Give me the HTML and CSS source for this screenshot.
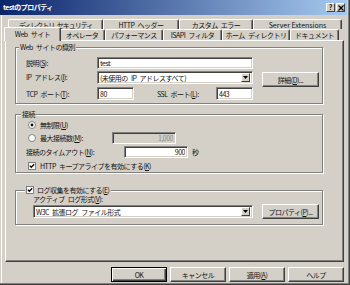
FILE: index.html
```html
<!DOCTYPE html>
<html lang="ja">
<head>
  <meta charset="utf-8">
  <title>testのプロパティ</title>
  <link rel="stylesheet" href="styles.css">
</head>
<body>
<div class="window">
  <div class="titlebar">
    <span class="title">testのプロパティ</span>
    <div class="caption-buttons">
      <span class="cap-btn">?</span>
      <span class="cap-btn">
        <svg width="6" height="6" viewBox="0 0 6 6"><path d="M0.5 0.5 L5.5 5.5 M5.5 0.5 L0.5 5.5" stroke="#000" stroke-width="1.3"/></svg>
      </span>
    </div>
  </div>

  <div class="tabs">
    <div class="tab-row back">
      <div class="tab tight">ディレクトリ セキュリティ</div>
      <div class="tab">HTTP ヘッダー</div>
      <div class="tab">カスタム エラー</div>
      <div class="tab latin">Server Extensions</div>
    </div>
    <div class="tab-row front">
      <div class="tab active">Web サイト</div>
      <div class="tab">オペレータ</div>
      <div class="tab">パフォーマンス</div>
      <div class="tab">ISAPI フィルタ</div>
      <div class="tab">ホーム ディレクトリ</div>
      <div class="tab">ドキュメント</div>
    </div>
  </div>

  <div class="panel">
    <fieldset class="group group-id">
      <legend>Web サイトの識別</legend>
      <div class="row row-desc">
        <label class="label">説明(<u>S</u>):</label>
        <input class="textbox wide" type="text" value="test">
      </div>
      <div class="row row-ip">
        <label class="label">IP アドレス(<u>I</u>):</label>
        <div class="combo wide">
          <span class="combo-text">(未使用の IP アドレスすべて)</span>
          <span class="drop-btn"><svg width="5" height="3" viewBox="0 0 5 3"><path d="M0 0 H5 L2.5 3 Z" fill="#000"/></svg></span>
        </div>
        <button class="btn side-btn">詳細(<u>D</u>)...</button>
      </div>
      <div class="row row-port">
        <label class="label">TCP ポート(<u>T</u>):</label>
        <input class="textbox port" type="text" value="80">
        <label class="label ssl">SSL ポート(<u>L</u>):</label>
        <input class="textbox port" type="text" value="443">
      </div>
    </fieldset>

    <fieldset class="group group-conn">
      <legend>接続</legend>
      <div class="row row-opt">
        <svg class="radio" width="8" height="8" viewBox="0 0 8 8"><circle cx="4" cy="4" r="3.5" fill="#fff" stroke="#808080"/><circle cx="4" cy="4" r="1.4" fill="#000"/></svg>
        <span>無制限(<u>U</u>)</span>
      </div>
      <div class="row row-field">
        <svg class="radio" width="8" height="8" viewBox="0 0 8 8"><circle cx="4" cy="4" r="3.5" fill="#fff" stroke="#808080"/></svg>
        <label class="label conn-label">最大接続数(<u>M</u>):</label>
        <input class="textbox num" type="text" value="1,000" disabled>
      </div>
      <div class="row row-field">
        <label class="label timeout-label">接続のタイムアウト(<u>N</u>):</label>
        <input class="textbox num" type="text" value="900">
        <span class="unit">秒</span>
      </div>
      <div class="row row-opt row-keep">
        <svg class="check" width="8" height="8" viewBox="0 0 8 8"><rect x="0.5" y="0.5" width="7" height="7" fill="#fff" stroke="#808080"/><path d="M1.8 3.6 L3.3 5.2 L6.2 2.2" fill="none" stroke="#000" stroke-width="1.3"/></svg>
        <span>HTTP キープアライブを有効にする(<u>K</u>)</span>
      </div>
    </fieldset>

    <fieldset class="group group-log">
      <legend>
        <svg class="check" width="8" height="8" viewBox="0 0 8 8"><rect x="0.5" y="0.5" width="7" height="7" fill="#fff" stroke="#808080"/><path d="M1.8 3.6 L3.3 5.2 L6.2 2.2" fill="none" stroke="#000" stroke-width="1.3"/></svg>
        <span>ログ収集を有効にする(<u>E</u>)</span>
      </legend>
      <div class="log-label">アクティブ ログ形式(<u>V</u>):</div>
      <div class="row row-log">
        <div class="combo log-combo">
          <span class="combo-text">W3C 拡張ログ ファイル形式</span>
          <span class="drop-btn"><svg width="5" height="3" viewBox="0 0 5 3"><path d="M0 0 H5 L2.5 3 Z" fill="#000"/></svg></span>
        </div>
        <button class="btn side-btn">プロパティ(<u>P</u>)...</button>
      </div>
    </fieldset>
  </div>

  <div class="dialog-buttons">
    <button class="btn dlg default">OK</button>
    <button class="btn dlg">キャンセル</button>
    <button class="btn dlg">適用(<u>A</u>)</button>
    <button class="btn dlg">ヘルプ</button>
  </div>
</div>
</body>
</html>
```

FILE: styles.css
```css
* {
  box-sizing: border-box;
}

body {
  margin: 0;
  font-family: "Noto Sans CJK JP", "Noto Sans", sans-serif;
  font-size: 7px;
  letter-spacing: -0.5px;
  word-spacing: 2px;
  color: #111;
  background: #d4d0c8;
}

u {
  text-decoration-thickness: 1px;
  text-underline-offset: 1px;
}

.window {
  width: 350px;
  height: 285px;
  padding-right: 3px;
  background: #d4d0c8;
  box-shadow: inset -1px -1px 0 #404040, inset -2px -2px 0 #808080, inset 1px 0 0 #d4d0c8, inset 2px 0 0 #ffffff;
}

/* title bar */
.titlebar {
  height: 15px;
  display: flex;
  align-items: center;
  justify-content: space-between;
  padding: 0 2px 0 3px;
  background: linear-gradient(to right, #0a246a, #a6caf0);
  color: #fff;
  font-weight: bold;
}

.title {
  line-height: 15px;
}

.caption-buttons {
  display: flex;
}

.cap-btn {
  width: 9px;
  height: 9px;
  display: flex;
  align-items: center;
  justify-content: center;
  background: #d4d0c8;
  color: #000;
  font-size: 7px;
  letter-spacing: 0;
  line-height: 1;
  border: 1px solid;
  border-color: #fff #404040 #404040 #fff;
}

.cap-btn + .cap-btn {
  margin-left: 1px;
}

/* tabs */
.tabs {
  margin-top: 4px;
}

.tab-row {
  display: flex;
}

.tab-row.back {
  height: 10px;
  margin-left: 8px;
}

.tab-row.front {
  height: 11px;
  margin-left: 6px;
}

.tab {
  height: 100%;
  display: flex;
  align-items: center;
  justify-content: center;
  white-space: nowrap;
  background: #d4d0c8;
  border: 1px solid #fff;
  border-right-color: #404040;
  border-bottom: none;
  border-radius: 2px 2px 0 0;
  box-shadow: inset -1px 0 0 #808080;
}

.tab.tight {
  letter-spacing: -1px;
}

.tab.latin {
  letter-spacing: 0;
  word-spacing: 0;
}

.back .tab:nth-child(1) { width: 95px; }
.back .tab:nth-child(2) { width: 76px; }
.back .tab:nth-child(3) { width: 74px; }
.back .tab:nth-child(4) { width: 89px; }

.front .tab:nth-child(1) { width: 57px; }
.front .tab:nth-child(2) { width: 46px; }
.front .tab:nth-child(3) { width: 58px; }
.front .tab:nth-child(4) { width: 59px; }
.front .tab:nth-child(5) { width: 68px; }
.front .tab:nth-child(6) { width: 49px; }

.tab.active {
  position: relative;
  z-index: 1;
  align-self: flex-start;
  height: 14px;
  margin: -2px -2px 0;
  padding-bottom: 2px;
}

/* page */
.panel {
  margin-left: 5px;
  width: 339px;
  height: 222px;
  padding: 1px 0 0 9px;
  border: 1px solid #fff;
  border-right-color: #404040;
  border-bottom-color: #404040;
  box-shadow: inset -1px -1px 0 #808080;
}

.group {
  width: 308px;
  margin: 0;
  min-inline-size: 0;
  padding: 5px 0 3px 10px;
  border: 1px solid #808080;
  box-shadow: inset 1px 1px 0 #fff, 1px 1px 0 #fff;
}

.group legend {
  margin-left: -7px;
  padding: 0 1px;
  line-height: 10px;
  background: #d4d0c8;
}

.row {
  display: flex;
  align-items: center;
}

.label {
  white-space: nowrap;
}

.textbox,
.combo {
  height: 12px;
  border: 1px solid;
  border-color: #808080 #fff #fff #808080;
  box-shadow: inset 1px 1px 0 #404040, inset -1px -1px 0 #d4d0c8;
  background: #fff;
}

.textbox {
  margin: 0;
  padding: 0 2px;
  font: inherit;
  letter-spacing: inherit;
  word-spacing: inherit;
  line-height: 10px;
  color: #111;
  outline: none;
}

.textbox:disabled {
  background: #d4d0c8;
  color: #8a8a8a;
}

.combo {
  height: 13px;
  display: flex;
  align-items: center;
  justify-content: space-between;
  padding: 2px;
  white-space: nowrap;
}

.drop-btn {
  width: 9px;
  height: 9px;
  display: flex;
  align-items: center;
  justify-content: center;
  background: #d4d0c8;
  border: 1px solid;
  border-color: #fff #404040 #404040 #fff;
}

.btn {
  margin: 0;
  padding: 0;
  font: inherit;
  letter-spacing: inherit;
  word-spacing: inherit;
  color: #111;
  background: #d4d0c8;
  border: 1px solid;
  border-color: #fff #404040 #404040 #fff;
  box-shadow: inset -1px -1px 0 #808080;
  white-space: nowrap;
}

/* group 1 */
.group-id .row .label:first-child {
  width: 71px;
}

.wide {
  width: 156px;
}

.row-desc {
  height: 12px;
  margin-bottom: 2px;
}

.row-ip {
  height: 16px;
  align-items: flex-start;
}

.row-ip .label {
  line-height: 13px;
}

.side-btn {
  width: 57px;
  height: 15px;
  margin: 1px 0 0 9px;
}

.row-port {
  height: 13px;
}

.port {
  width: 37px;
  height: 13px;
}

.label.ssl {
  width: 59px;
  margin-left: 23px;
}

/* group 2 */
.group-conn {
  margin-top: 5px;
  padding: 1px 0 1px 10px;
}

.group-conn legend {
  margin-left: -5px;
}

.row-opt {
  height: 10px;
}

.radio,
.check {
  flex: none;
  margin: 0 4px 0 2px;
}

.row-field {
  height: 12px;
  margin-top: 2px;
}

.conn-label {
  width: 72px;
}

.timeout-label {
  width: 98px;
}

.num {
  width: 64px;
  text-align: right;
}

.unit {
  margin-left: 4px;
}

.row-keep {
  margin-top: 3px;
}

/* group 3 */
.group-log {
  margin-top: 12px;
  padding: 0 0 5px 17px;
}

.group-log legend {
  display: flex;
  align-items: center;
  margin-left: -8px;
  padding: 0 2px 0 0;
}

.group-log legend .check {
  margin: 0 3px 0 1px;
}

.log-label {
  height: 9px;
  line-height: 9px;
}

.row-log {
  height: 15px;
  align-items: flex-start;
}

.log-combo {
  width: 220px;
  margin-top: 1px;
}

.row-log .side-btn {
  margin-top: 0;
}

/* dialog buttons */
.dialog-buttons {
  display: flex;
  justify-content: flex-end;
  gap: 3px;
  margin-top: 5px;
  padding-right: 3px;
}

.dlg {
  width: 56px;
  height: 15px;
}

.dlg.default {
  border-color: #000;
  box-shadow: inset 1px 1px 0 #fff, inset -1px -1px 0 #404040, inset -2px -2px 0 #808080;
}
```
